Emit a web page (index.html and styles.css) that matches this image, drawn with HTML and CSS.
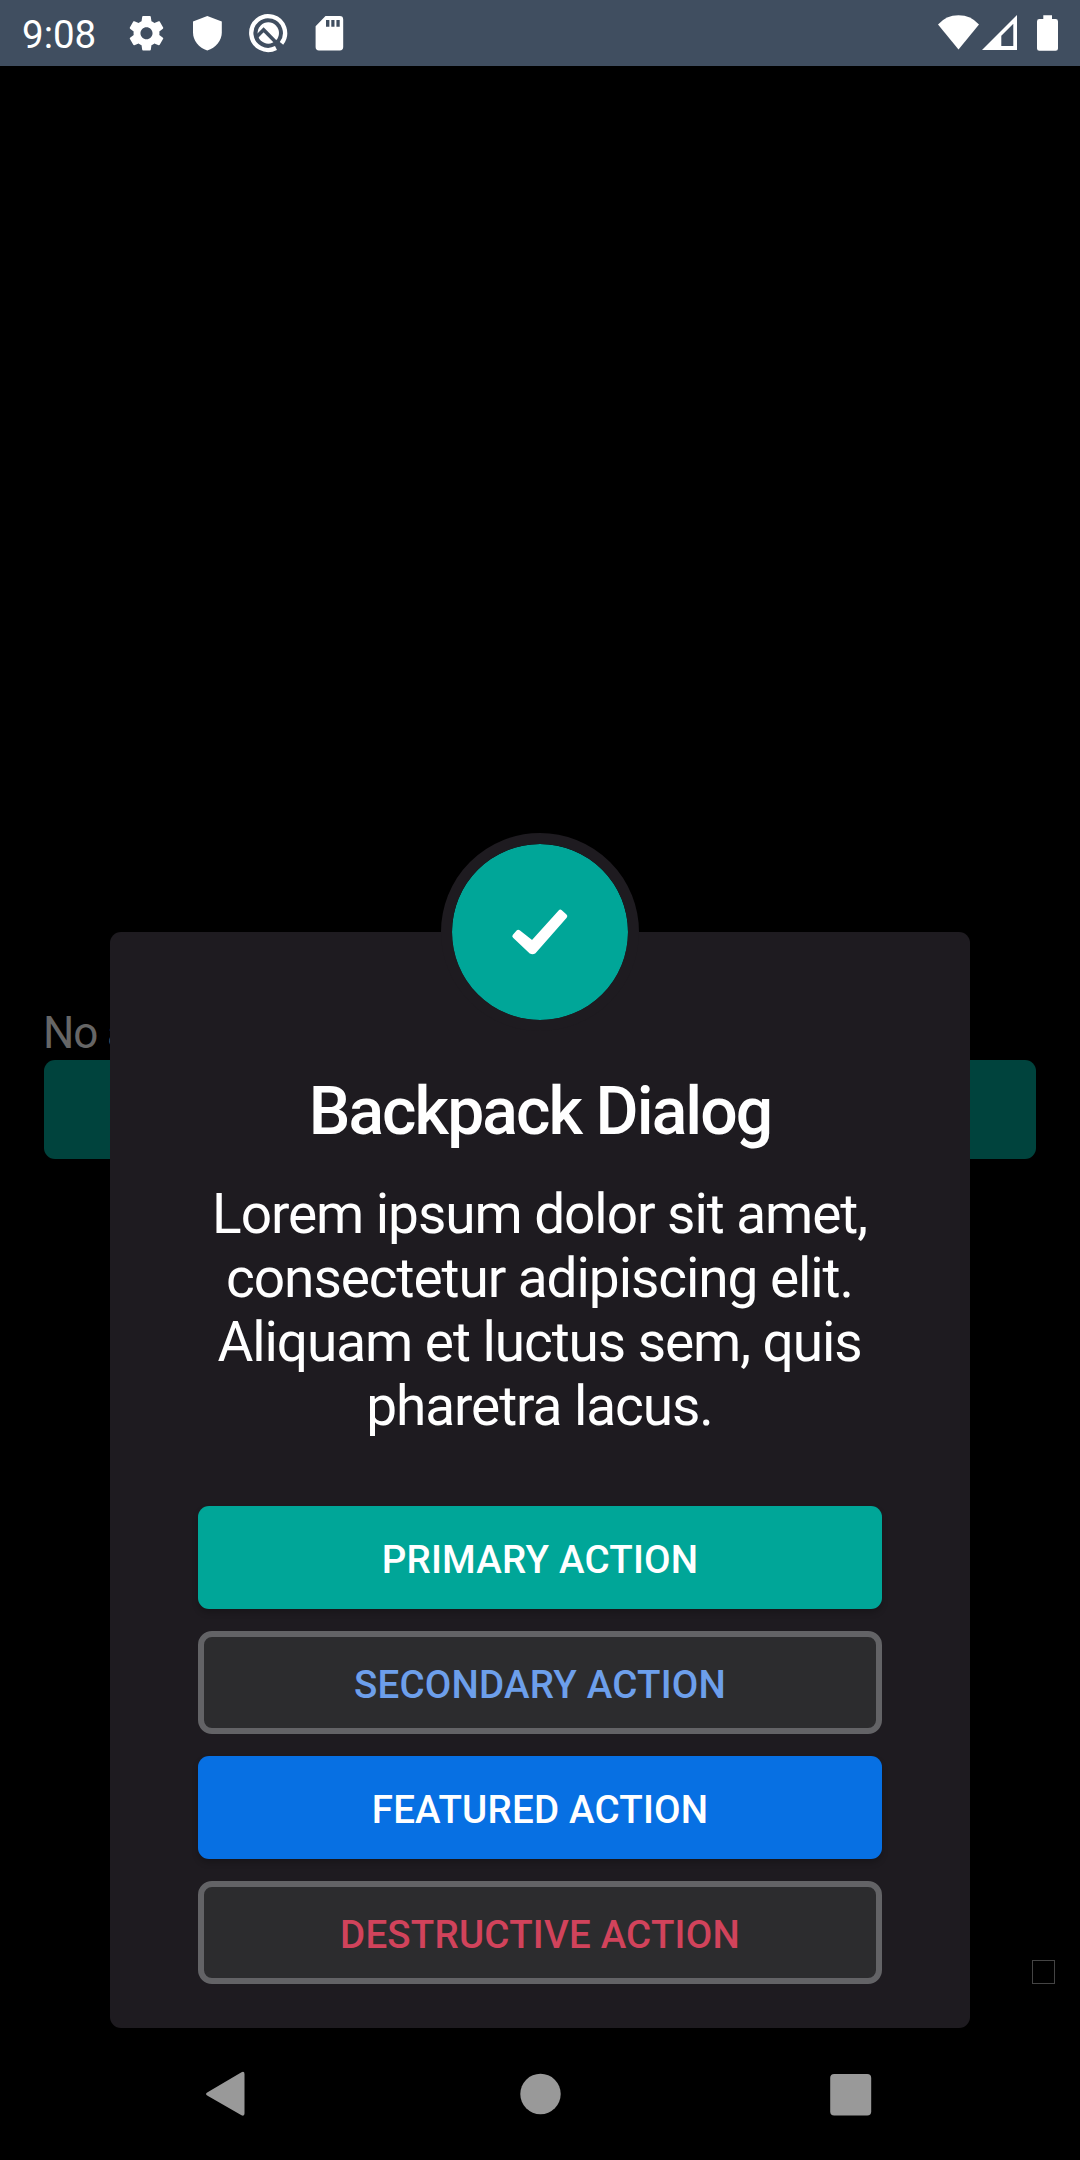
FILE: index.html
```html
<!DOCTYPE html>
<html lang="en">
<head>
<meta charset="utf-8">
<title>Backpack Dialog</title>
<link rel="stylesheet" href="styles.css">
</head>
<body>
<div class="screen">
  <header class="status-bar">
    <span class="clock">9:08</span>
    <svg class="status-icons" width="240" height="66" viewBox="120 0 240 66" fill="#fff">
      <g transform="translate(125.8 12.5) scale(1.725)"><path d="M19.43 12.98c.04-.32.07-.64.07-.98s-.03-.66-.07-.98l2.11-1.65c.19-.15.24-.42.12-.64l-2-3.46c-.12-.22-.39-.3-.61-.22l-2.49 1c-.52-.4-1.08-.73-1.69-.98l-.38-2.65C14.46 2.18 14.25 2 14 2h-4c-.25 0-.46.18-.49.42l-.38 2.65c-.61.25-1.17.59-1.69.98l-2.49-1c-.23-.09-.49 0-.61.22l-2 3.46c-.13.22-.07.49.12.64l2.11 1.65c-.04.32-.07.65-.07.98s.03.66.07.98l-2.11 1.65c-.19.15-.24.42-.12.64l2 3.46c.12.22.39.3.61.22l2.49-1c.52.4 1.08.73 1.69.98l.38 2.65c.03.24.24.42.49.42h4c.25 0 .46-.18.49-.42l.38-2.65c.61-.25 1.17-.59 1.69-.98l2.49 1c.23.09.49 0 .61-.22l2-3.46c.12-.22.07-.49-.12-.64l-2.11-1.65zM12 15.5c-1.93 0-3.5-1.57-3.5-3.5s1.57-3.5 3.5-3.5 3.5 1.57 3.5 3.5-1.57 3.5-3.5 3.5z"/></g>
      <path d="M207.300 16l14.500 5.500v11c0 8-6 15.500-14.500 18-8.500-2.500-14.300-10-14.300-18v-11z"/>
      <path d="M276 48A16.900 16.900 0 1 1 281.500 43.400" fill="none" stroke="#fff" stroke-width="4.300"/>
      <circle cx="268.300" cy="33" r="10.700"/>
      <path d="M256.500 37L263.600 29.800 281 47.500" fill="none" stroke="#404e60" stroke-width="3.600"/>
      <path fill-rule="evenodd" d="M325.500 16h14.300q3.400 0 3.400 3.400v27.700q0 3.400-3.400 3.400h-20.800q-3.400 0-3.400-3.400v-20.800zM326 20v6.700h3.400v-6.700zM331.300 20v6.700h3.200v-6.700zM336.400 20v6.700h3.300v-6.700z"/>
    </svg>
    <svg class="signal-icons" width="140" height="66" viewBox="930 0 140 66" fill="#fff">
      <path d="M938 24.500Q946 15.200 958.500 15.200T979 24.500L958.500 49.500z"/>
      <path fill-rule="evenodd" d="M1017 15v35h-35zM1013.300 23.800l-12 12v10.200h12z"/>
      <path d="M1043.300 15.200h8.700v3.800h3.600q2.400 0 2.400 2.400v27q0 2.400-2.400 2.400h-16.200q-2.400 0-2.400-2.400v-27q0-2.400 2.400-2.400h3.900z"/>
    </svg>
  </header>
  <main class="content">
    <p class="label">No action performed</p>
    <div class="show-button"></div>
  </main>
  <nav class="nav-bar">
    <svg width="48" height="48" viewBox="0 0 48 48"><path d="M8 22L41.500 2.200Q44.500 1 44.500 4V43.500Q44.500 46.500 41.500 45.300L8 26Q4 24 8 22z"/></svg>
    <svg width="48" height="48" viewBox="0 0 48 48"><circle cx="26.500" cy="24" r="20.200"/></svg>
    <svg width="48" height="48" viewBox="0 0 48 48"><rect x="3.200" y="4" width="41" height="41.500" rx="4"/></svg>
  </nav>
  <i class="glyph-box"></i>
  <section class="dialog">
    <div class="badge">
      <svg width="176" height="176" viewBox="0 0 176 176"><path d="M62.600 92.200L66.300 88 80.300 99 108.300 68 113 72.200 82 107.600Q80.500 108.500 79 107.600z" fill="#fff" stroke="#fff" stroke-width="4.500" stroke-linejoin="round"/></svg>
    </div>
    <h1 class="title">Backpack Dialog</h1>
    <p class="description">Lorem ipsum dolor sit amet,<br>consectetur adipiscing elit.<br>Aliquam et luctus sem, quis<br>pharetra lacus.</p>
    <div class="actions">
      <button class="action primary">PRIMARY ACTION</button>
      <button class="action outlined secondary">SECONDARY ACTION</button>
      <button class="action featured">FEATURED ACTION</button>
      <button class="action outlined destructive">DESTRUCTIVE ACTION</button>
    </div>
  </section>
</div>
</body>
</html>
```
FILE: styles.css
```css
* { box-sizing: border-box; }
body { margin: 0; background: #000; font-family: Roboto, "Liberation Sans", sans-serif; }
.screen { position: relative; width: 1080px; height: 2160px; overflow: hidden; display: flex; flex-direction: column; background: #000; }
.status-bar { height: 66px; padding: 0 10px 0 22px; display: flex; align-items: center; background: #404e60; color: #fff; }
.clock { width: 98px; font-size: 38.5px; line-height: 45px; padding-top: 2px; }
.signal-icons { margin-left: auto; }
.content { flex: 1; padding: 941px 44px 0; }
.label { margin: 0 0 0 -1px; height: 53px; font-size: 44px; line-height: 52px; letter-spacing: -1.1px; color: #666; }
.show-button { height: 99px; border-radius: 11px; background: #00433d; }
.nav-bar { height: 132px; padding: 0 205px 0 200px; display: flex; align-items: center; justify-content: space-between; fill: #999; }
.nav-bar svg { display: block; }
.glyph-box { position: absolute; left: 1032px; top: 1960px; width: 23px; height: 24px; border: 1px solid #444; }
.dialog { position: absolute; left: 110px; top: 932px; width: 860px; height: 1096px; padding: 0 88px; display: flex; flex-direction: column; align-items: center; border-radius: 11px; background: #1e1b20; color: #fff; }
.badge { width: 198px; height: 198px; margin-top: -99px; border: 11px solid #1e1b20; border-radius: 50%; background: #00a698; background-clip: padding-box; flex: none; }
.badge svg { display: block; }
.title { margin: 42px 0 0; font-size: 66px; line-height: 78px; font-weight: 500; letter-spacing: -1.9px; white-space: nowrap; }
.description { margin: 31px 1px 0 0; font-size: 55px; line-height: 64px; letter-spacing: -1.08px; text-align: center; white-space: nowrap; }
.actions { width: 684px; margin-top: auto; margin-bottom: 44px; display: flex; flex-direction: column; gap: 22px; }
.action { height: 103px; padding: 5px 0 0; border: 0; border-radius: 11px; color: #fff; font: 500 38.5px/46px Roboto, "Liberation Sans", sans-serif; letter-spacing: .2px; text-align: center; }
.primary { background: #00a698; box-shadow: 0 4px 6px rgba(0, 0, 0, .2); }
.featured { background: #0770e3; box-shadow: 0 4px 6px rgba(0, 0, 0, .2); }
.outlined { border: 6px solid #636366; border-radius: 14px; background: #2c2c2e; }
.secondary { color: #6d9feb; }
.destructive { color: #d1435b; }
```
